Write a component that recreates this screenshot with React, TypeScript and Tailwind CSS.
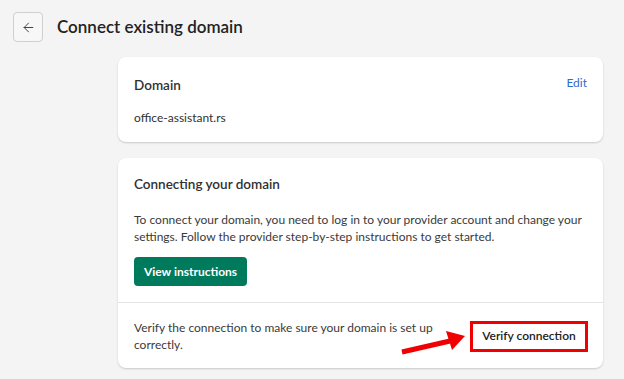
import { ArrowLeft } from "lucide-react";

export default function App() {
  return (
    <main className="relative min-h-[379px] w-[624px] bg-[#f4f4f5] font-['Lato',sans-serif] text-[#303030]">
      <header className="flex items-center gap-[14px] px-[13px] pt-[12px]">
        <button className="flex h-[30px] w-[30px] items-center justify-center rounded-[4px] border border-[#d0d0d4] bg-[#f7f7f8]">
          <ArrowLeft size={15} strokeWidth={1.6} className="text-[#444]" />
        </button>
        <h1 className="text-[17px] font-semibold text-[#222]">Connect existing domain</h1>
      </header>

      <div className="ml-[118px] mt-[15px] flex w-[485px] flex-col gap-[16px] pb-[12px]">
        <section className="rounded-[8px] bg-white px-[16px] pb-[14px] pt-[18px] shadow-[0_1px_2px_rgba(0,0,0,0.18)]">
          <div className="flex items-start justify-between">
            <h2 className="text-[13.5px] font-semibold leading-[20px]">Domain</h2>
            <a className="text-[12px] leading-[16px] text-[#2c6ecb]">Edit</a>
          </div>
          <p className="mt-[13px] text-[12px] leading-[20px]">office-assistant.rs</p>
        </section>

        <section className="rounded-[8px] bg-white shadow-[0_1px_2px_rgba(0,0,0,0.18)]">
          <div className="px-[16px] pb-[16px] pt-[16px]">
            <h2 className="text-[13.5px] font-semibold leading-[20px]">Connecting your domain</h2>
            <p className="mt-[17px] text-[12px] leading-[17px] text-[#3a3a3a]">
              To connect your domain, you need to log in to your provider account and change your settings. Follow
              the provider step-by-step instructions to get started.
            </p>
            <button className="mt-[12px] h-[29px] w-[113px] rounded-[4px] bg-[#007a5c] text-[12px] font-bold text-white">
              View instructions
            </button>
          </div>
          <div className="flex items-center justify-between border-t border-[#e3e3e3] pb-[15px] pl-[16px] pr-[15px] pt-[16px]">
            <p className="w-[300px] text-[12px] leading-[17px] text-[#3a3a3a]">
              Verify the connection to make sure your domain is set up correctly.
            </p>
            <button className="h-[31px] w-[118px] border-[3px] border-[#f00000] bg-white text-[12px] font-semibold text-[#222]">
              Verify connection
            </button>
          </div>
        </section>
      </div>

      <svg className="absolute left-[398px] top-[326px]" width="72" height="30" viewBox="0 0 72 30">
        <line x1="4" y1="26" x2="52" y2="15" stroke="#f00000" strokeWidth="5" />
        <polygon points="67,10 48,5 54,24" fill="#f00000" />
      </svg>
    </main>
  );
}
